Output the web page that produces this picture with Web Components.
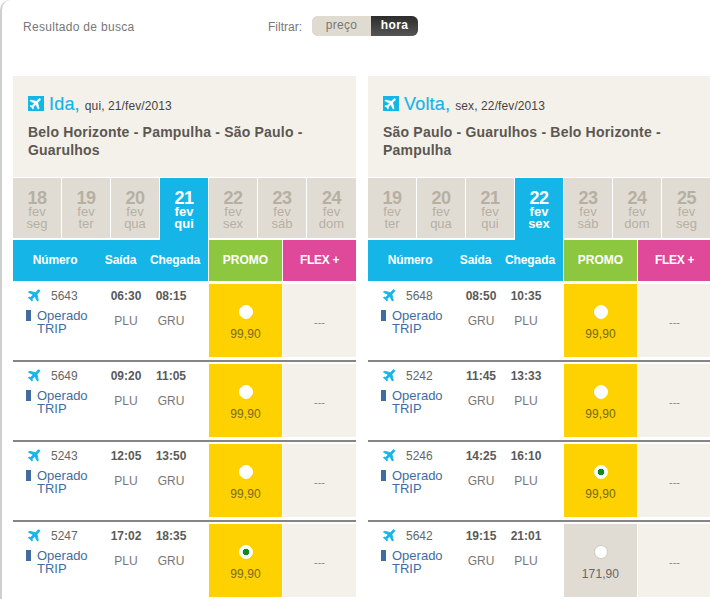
<!DOCTYPE html>
<html lang="pt">
<head>
<meta charset="utf-8">
<title>Resultado de busca</title>
<style>
  html, body { margin: 0; background: #fff; }
  body { font-family: "Liberation Sans", Arial, sans-serif; color: #666; }
</style>
</head>
<body>
<search-page></search-page>
<script>
const PLANE = 'M21 16v-2l-8-5V3.5c0-.83-.67-1.5-1.5-1.5S10 2.67 10 3.5V9l-8 5v2l8-2.5V19l-2 1.5V22l3.5-1 3.5 1v-1.5L13 19v-5.5l8 2.5z'

class FilterToggle extends HTMLElement {
  constructor() {
    super()
    this.attachShadow({ mode: 'open' }).innerHTML = `
      <style>
        :host { display: flex; align-items: center; font-size: 12px; }
        .label { width: 44px; color: #777; margin-top: 2px; }
        .toggle { display: flex; width: 106px; height: 20px; border-radius: 6px; overflow: hidden; line-height: 19px; text-align: center; box-shadow: inset 0 0 0 1px #c9c3b7; }
        .off { width: 59px; color: #777; background: #e0dbd1; letter-spacing: .3px; }
        .on { flex: 1; color: #fff; font-weight: bold; letter-spacing: .4px; background: linear-gradient(#2c2c2c, #555); }
      </style>
      <span class="label">Filtrar:</span>
      <div class="toggle"><span class="off">preço</span><span class="on">hora</span></div>
    `
  }
}
customElements.define('filter-toggle', FilterToggle)

class DateTab extends HTMLElement {
  css = `
    <style>
      :host { display: block; height: 60px; background: #e1dcd3; color: #b6b0a3; text-align: center; font-size: 13px; line-height: 12px; box-sizing: border-box; padding-top: 12px; }
      :host([active]) { height: 62px; background: #15b5e8; color: #fff; font-weight: bold; }
      b { display: block; font-size: 18px; line-height: 16px; letter-spacing: -.4px; }
      span { display: block; }
    </style>
  `
  constructor() {
    super()
    const { day, week } = this.dataset
    this.attachShadow({ mode: 'open' }).innerHTML = `
      ${this.css}
      <b>${day}</b><span>fev</span><span>${week}</span>
    `
  }
}
customElements.define('date-tab', DateTab)

class FareCell extends HTMLElement {
  css = `
    <style>
      :host { display: block; height: 73px; background: #fed100; color: #7a6a20; text-align: center; font-size: 12px; line-height: 14px; box-sizing: border-box; padding-top: 21px; }
      :host([grey]) { background: #e1dcd3; color: #666; }
      i { display: block; box-sizing: border-box; width: 14px; height: 14px; margin: 0 auto 8px; border-radius: 50%; background: #fff; border: 1px solid #fff; }
      :host([grey]) i { border-color: #cfcac0; }
      :host([picked]) i { background: radial-gradient(circle, #0f8a22 0 3px, #fff 3.6px); }
      span { letter-spacing: .1px; }
    </style>
  `
  constructor() {
    super()
    this.attachShadow({ mode: 'open' }).innerHTML = `
      ${this.css}
      <i></i><span>${this.dataset.price}</span>
    `
  }
}
customElements.define('fare-cell', FareCell)

class FlightRow extends HTMLElement {
  css = `
    <style>
      :host { display: grid; grid-template-columns: 195px 73px 73px; column-gap: 1px; padding: 2px 0 3px; border-bottom: 2px solid #858585; font-size: 12px; }
      :host(:last-child) { border-bottom: 0; }
      .info { display: grid; grid-template-columns: 90px 46px 44px; grid-template-rows: 18px auto; align-content: start; padding-top: 3px; line-height: 14px; }
      .num { display: flex; align-items: center; padding-left: 14px; color: #666; }
      .num svg { width: 16px; height: 16px; margin: -3px 8px 0 0; overflow: visible; }
      .op { display: flex; padding-left: 13px; margin-top: 4px; font-size: 13px; line-height: 13px; color: #3f6ca3; grid-column: 1; }
      .op i { width: 5px; height: 11px; margin: 1px 6px 0 0; background: #3f6ca3; }
      .time { font-weight: bold; color: #5a5a5a; text-align: center; align-self: center; }
      .code { color: #777; text-align: center; margin-top: 9px; }
      .flex { background: #f4f1eb; height: 73px; line-height: 76px; text-align: center; font-size: 11px; color: #888; }
    </style>
  `
  set flight(f) {
    this.shadowRoot.innerHTML = `
      ${this.css}
      <div class="info">
        <div class="num"><svg viewBox="0 0 24 24"><path fill="#15b5e8" stroke="#15b5e8" stroke-width="1.2" transform="rotate(45 12 12)" d="${PLANE}"/></svg>${f.num}</div>
        <div class="time">${f.dep}</div>
        <div class="time">${f.arr}</div>
        <div class="op"><i></i><div>Operado<br>TRIP</div></div>
        <div class="code">${f.from}</div>
        <div class="code">${f.to}</div>
      </div>
      <fare-cell data-price="${f.price}" ${f.picked ? 'picked' : ''} ${f.grey ? 'grey' : ''}></fare-cell>
      <div class="flex">---</div>
    `
  }
  constructor() {
    super()
    this.attachShadow({ mode: 'open' })
  }
}
customElements.define('flight-row', FlightRow)

class FlightPanel extends HTMLElement {
  css = `
    <style>
      :host { display: block; width: 343px; flex: none; }
      .head { height: 101px; box-sizing: border-box; padding: 18px 15px 0 15px; background: #f4f1eb; margin-bottom: 1px; }
      .title { display: flex; align-items: baseline; height: 24px; }
      .badge { width: 16px; height: 15px; background: #15b5e8; margin: 0 5px 5px 0; align-self: center; display: flex; }
      .badge svg { width: 16px; height: 15px; }
      .title b { font-weight: normal; font-size: 18px; color: #15b5e8; margin-right: 5px; letter-spacing: .2px; -webkit-text-stroke: .2px #15b5e8; }
      .title span { font-size: 12px; color: #444; letter-spacing: .1px; }
      .route { margin-top: 5px; font-size: 14px; line-height: 18px; font-weight: bold; color: #5c5751; letter-spacing: .2px; }
      .tabs { display: grid; grid-template-columns: repeat(6, 48px) 49px; column-gap: 1px; height: 62px; align-items: start; }
      .cols { display: grid; grid-template-columns: 195px 73px 73px; column-gap: 1px; height: 40px; line-height: 41px; font-size: 12px; font-weight: bold; color: #fff; text-align: center; }
      .names { display: grid; grid-template-columns: 84px 47px 62px; background: #15b5e8; letter-spacing: -.1px; }
      .promo { background: #8dc63f; }
      .plus { background: #e0489a; letter-spacing: -.3px; }
      .rows { padding-top: 2px; }
    </style>
  `
  set leg(leg) {
    this.shadowRoot.innerHTML = `
      ${this.css}
      <div class="head">
        <div class="title">
          <span class="badge"><svg viewBox="0 0 24 24"><path fill="#fff" stroke="#fff" stroke-width=".8" transform="rotate(45 12 12)" d="${PLANE}"/></svg></span>
          <b>${leg.name},</b><span>${leg.date}</span>
        </div>
        <div class="route">${leg.route}</div>
      </div>
      <div class="tabs">
        ${leg.days.map(([day, week]) => `<date-tab data-day="${day}" data-week="${week}" ${day === leg.active ? 'active' : ''}></date-tab>`).join('')}
      </div>
      <div class="cols">
        <div class="names"><span>Número</span><span>Saída</span><span>Chegada</span></div>
        <div class="promo">PROMO</div>
        <div class="plus">FLEX +</div>
      </div>
      <div class="rows"></div>
    `
    const rows = this.shadowRoot.querySelector('.rows')
    leg.flights.forEach(f => {
      const row = document.createElement('flight-row')
      rows.appendChild(row)
      row.flight = f
    })
  }
  constructor() {
    super()
    this.attachShadow({ mode: 'open' })
  }
}
customElements.define('flight-panel', FlightPanel)

const mk = (num, dep, arr, from, to, price, extra) => ({ num, dep, arr, from, to, price, ...extra })

const LEGS = [
  {
    name: 'Ida', date: 'qui, 21/fev/2013', active: '21',
    route: 'Belo Horizonte - Pampulha - São Paulo -<br>Guarulhos',
    days: [['18', 'seg'], ['19', 'ter'], ['20', 'qua'], ['21', 'qui'], ['22', 'sex'], ['23', 'sáb'], ['24', 'dom']],
    flights: [
      mk('5643', '06:30', '08:15', 'PLU', 'GRU', '99,90'),
      mk('5649', '09:20', '11:05', 'PLU', 'GRU', '99,90'),
      mk('5243', '12:05', '13:50', 'PLU', 'GRU', '99,90'),
      mk('5247', '17:02', '18:35', 'PLU', 'GRU', '99,90', { picked: true })
    ]
  },
  {
    name: 'Volta', date: 'sex, 22/fev/2013', active: '22',
    route: 'São Paulo - Guarulhos - Belo Horizonte -<br>Pampulha',
    days: [['19', 'ter'], ['20', 'qua'], ['21', 'qui'], ['22', 'sex'], ['23', 'sáb'], ['24', 'dom'], ['25', 'seg']],
    flights: [
      mk('5648', '08:50', '10:35', 'GRU', 'PLU', '99,90'),
      mk('5242', '11:45', '13:33', 'GRU', 'PLU', '99,90'),
      mk('5246', '14:25', '16:10', 'GRU', 'PLU', '99,90', { picked: true }),
      mk('5642', '19:15', '21:01', 'GRU', 'PLU', '171,90', { grey: true })
    ]
  }
]

class SearchPage extends HTMLElement {
  constructor() {
    super()
    this.attachShadow({ mode: 'open' }).innerHTML = `
      <style>
        :host { display: block; width: 710px; height: 599px; overflow: hidden; box-sizing: border-box; border-left: 2px solid #cfcfcf; border-top-left-radius: 10px; font-family: "Liberation Sans", Arial, sans-serif; }
        .top { display: flex; align-items: center; height: 76px; box-sizing: border-box; padding: 16px 0 40px 21px; font-size: 12px; color: #777; }
        .top > span { width: 245px; margin-top: 2px; letter-spacing: .3px; }
        .panels { display: flex; gap: 12px; padding-left: 11px; }
      </style>
      <div class="top"><span>Resultado de busca</span><filter-toggle></filter-toggle></div>
      <div class="panels"></div>
    `
    const panels = this.shadowRoot.querySelector('.panels')
    LEGS.forEach(leg => {
      const panel = document.createElement('flight-panel')
      panels.appendChild(panel)
      panel.leg = leg
    })
  }
}
customElements.define('search-page', SearchPage)
</script>
</body>
</html>
